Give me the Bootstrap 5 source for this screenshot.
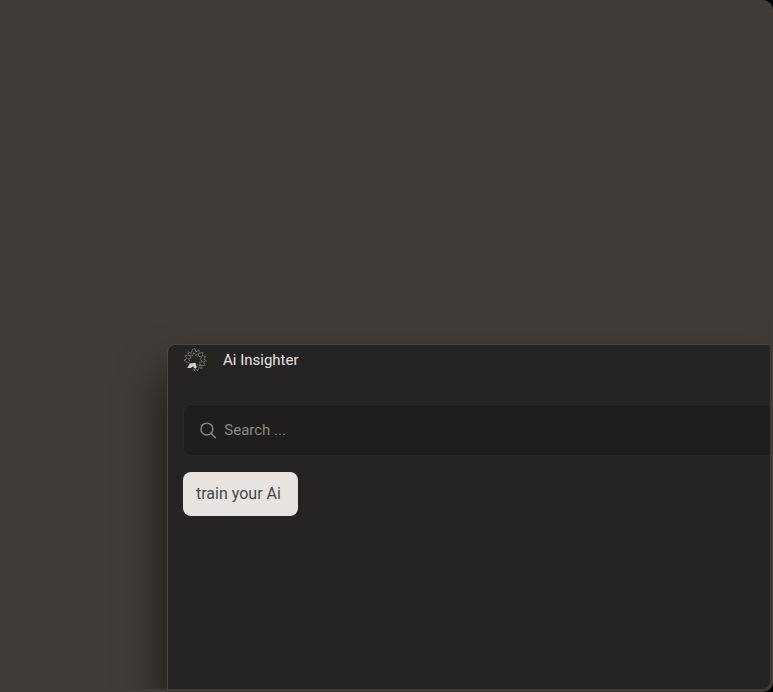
<!DOCTYPE html>
<html lang="en">
<head>
<meta charset="utf-8">
<meta name="viewport" content="width=device-width, initial-scale=1">
<title>Ai Insighter</title>
<link href="https://cdn.jsdelivr.net/npm/bootstrap@5.3.0/dist/css/bootstrap.min.css" rel="stylesheet">
<style>
body { background: #000; font-family: Roboto, "Liberation Sans", sans-serif; }
.stage { background: #403d38; border-radius: 0 10px 10px 0; padding: 0 3px 3px 0; }
.viewport-clip { border-radius: 0 0 8px 0; padding: 344px 0 0 167px; }
.window-panel {
  background: #252422;
  border: 1px solid #4a4845;
  border-width: 1px 0 0 1px;
  border-radius: 8px 0 0 0;
  box-shadow: 0 32px 48px rgba(0, 0, 0, .7);
  padding: 0 0 0 15px;
}
.window-title { font-size: 15px; line-height: 30px; color: #e6e3e0; }
.search-field { height: 52px; margin-top: 29px; padding-left: 16px; background: #1f1e1c; border: 1px solid #292826; border-right: 0; border-radius: 8px 0 0 8px; }
.search-field input, .search-field input:focus { background: transparent; color: #cfccc9; font-size: 15px; box-shadow: none; }
.search-field input::placeholder { color: #8b8885; opacity: 1; }
.train-btn { height: 44px; margin-top: 16px; padding: 0 17px 0 13px; border: 0; border-radius: 8px; font-size: 16px; }
.train-btn, .train-btn:hover { background: #e6e3e0; color: #4a4744; }
</style>
<script src="https://cdn.jsdelivr.net/npm/bootstrap@5.3.0/dist/js/bootstrap.bundle.min.js"></script>
</head>
<body>
<main class="stage vh-100 d-flex">
  <div class="viewport-clip flex-fill d-flex overflow-hidden">
    <section class="window-panel flex-fill" aria-label="Ai Insighter">
      <header class="d-flex align-items-center gap-3">
        <svg width="24" height="24" viewBox="0 0 24 24" fill="none" aria-hidden="true">
          <g stroke="#8d8b87" stroke-width=".8" stroke-dasharray="1.8 .5">
            <path d="M6.5 15 3.6 14 1 12 4 10.8 2 7.5 5.4 7.8 5 3.8 8.3 5.4 9.7 1.2 12 .6 12.7 4 16 2 16.3 5.2 20 4.4 19.2 7.8 22.4 8.4 20.8 11 23.4 13 20.5 14 22 17.5 18.4 17.2 19 20.5 15.7 19.3 14.6 23 12.4 20 11.5 23 10.4 19.6"/>
            <path d="M7 13.4 5.4 11 8 10 6.4 7.2 9.6 7.8 10.6 4.6 12.8 7.2 15.4 5.4 15.8 8.4 18.8 8.8 17 11.4 19.6 13.4 16.6 14.4 17.6 17.8 14.4 16.8 13 20 12.4 16.5"/>
          </g>
          <path d="m4.2 20 2.8-4.6 5.6-.6.7 5.2-2 .2-1.2-2-2.4 1.8-3.5 0Z" fill="#d5d3cf"/>
        </svg>
        <h1 class="window-title m-0 fw-normal">Ai Insighter</h1>
      </header>
      <label class="search-field d-flex align-items-center gap-2">
        <svg width="17" height="17" viewBox="0 0 17 17" fill="none" stroke="#8b8885" stroke-width="1.5" stroke-linecap="round" aria-hidden="true">
          <circle cx="7.2" cy="7" r="6.2"/><path d="m11.7 11.5 4.5 4.6"/>
        </svg>
        <input class="form-control border-0 p-0" type="text" placeholder="Search ..." aria-label="Search">
      </label>
      <button class="train-btn btn" type="button">train your Ai</button>
    </section>
  </div>
</main>
</body>
</html>
